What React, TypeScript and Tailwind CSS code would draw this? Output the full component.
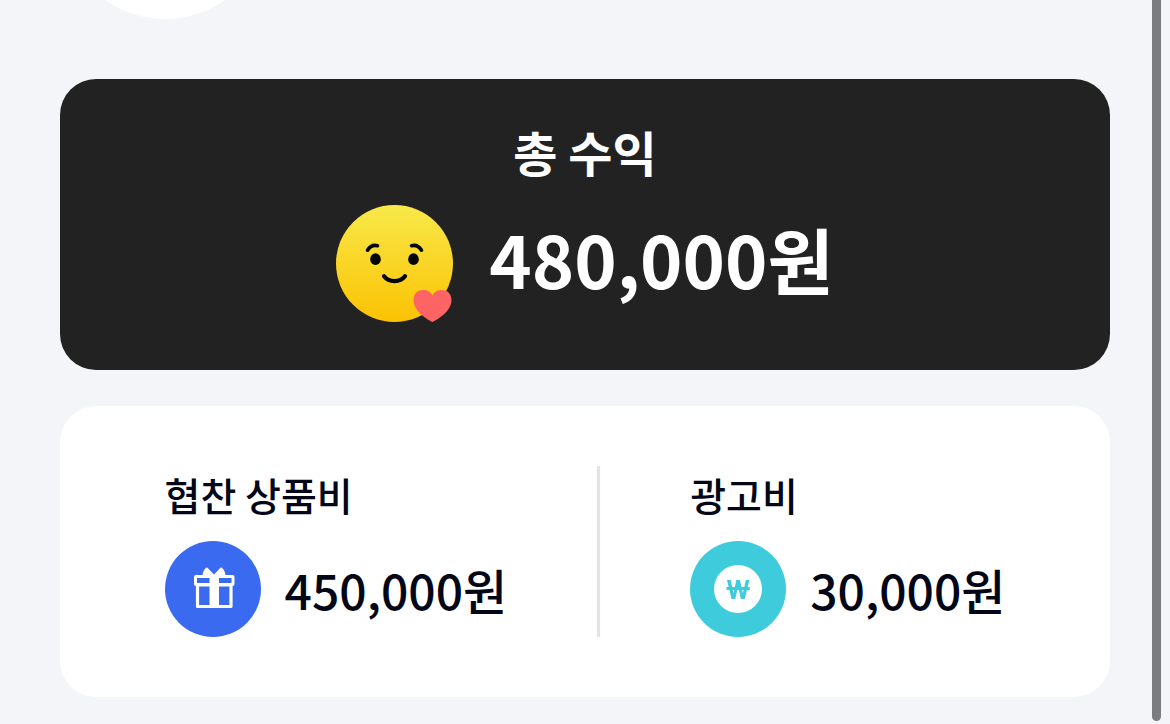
import React from 'react';

interface RevenueItemProps {
  label: string;
  amount: string;
  icon: React.ReactNode;
}

const SmileHeartIcon = () => (
  <svg width="117" height="117" viewBox="0 0 117 117" fill="none" aria-hidden="true" className="shrink-0">
    <defs>
      <linearGradient id="face" x1="58" y1="0" x2="58" y2="117" gradientUnits="userSpaceOnUse">
        <stop stopColor="#F8E94A" />
        <stop offset="1" stopColor="#FBC202" />
      </linearGradient>
    </defs>
    <circle cx="58.5" cy="58.5" r="58.5" fill="url(#face)" />
    <path d="M31.5 45.2C34 41.2 38 39.8 41.5 40.7" stroke="#000" strokeWidth="3.6" strokeLinecap="round" />
    <path d="M75.5 40.7C79.5 39.8 83 41.2 85.5 45.2" stroke="#000" strokeWidth="3.6" strokeLinecap="round" />
    <ellipse cx="39.5" cy="54.2" rx="5.3" ry="5.9" fill="#000" />
    <ellipse cx="77.5" cy="54.2" rx="5.3" ry="5.9" fill="#000" />
    <path d="M48 71.2C53 77.7 64 77.7 69 71.2" stroke="#000" strokeWidth="4.2" strokeLinecap="round" />
    <path
      d="M96.5 117C91 114.5 77.5 106 77.5 95C77.5 89 81.5 85 87 85C91.5 85 95 87 96.5 90.5C98 87 101.5 85 106 85C111.5 85 115.5 89 115.5 95C115.5 106 102 114.5 96.5 117Z"
      fill="#FF6464"
    />
  </svg>
);

const GiftIcon = () => (
  <svg width="96" height="96" viewBox="0 0 96 96" fill="none" aria-hidden="true" className="shrink-0">
    <circle cx="48" cy="48" r="48" fill="#3A6AF0" />
    <path
      d="M49 33.5L43 27.2Q41.8 26 40.6 27.2C38.7 29.2 37.6 31.5 37.5 35H60.5C60.4 31.5 59.3 29.2 57.4 27.2Q56.2 26 55 27.2Z"
      fill="#fff"
    />
    <rect x="30.5" y="35.5" width="37.5" height="8" rx="0.5" stroke="#fff" strokeWidth="3" />
    <path d="M32.5 44H66V65.5H32.5Z" stroke="#fff" strokeWidth="3.2" strokeLinejoin="round" />
    <path d="M44.5 34H54V66H44.5Z" fill="#fff" />
  </svg>
);

const WonIcon = () => (
  <svg width="96" height="96" viewBox="0 0 96 96" fill="none" aria-hidden="true" className="shrink-0">
    <circle cx="48" cy="48" r="48" fill="#3ECBDC" />
    <circle cx="48" cy="48" r="24" fill="#fff" />
    <path
      d="M37 39H40.6L43.6 52.2L46.3 39H49.9L52.8 52.2L55.9 39H59.4L54.7 58H50.9L48.1 45.5L45.3 58H41.5Z"
      fill="#3ECBDC"
    />
    <path d="M36.5 46H59.8V49H36.5Z" fill="#3ECBDC" />
  </svg>
);

function RevenueItem({ label, amount, icon }: RevenueItemProps) {
  return (
    <div className="flex flex-col gap-[18px]">
      <h3 className="text-[39px] leading-[57px] font-medium">{label}</h3>
      <div className="flex items-center gap-6">
        {icon}
        <p className="text-[48px] leading-[72px] font-medium">{amount}</p>
      </div>
    </div>
  );
}

export default function App() {
  return (
    <div className="relative min-h-screen overflow-hidden bg-[#F3F5F9] px-[60px] pb-[27px] text-[#020617] font-['Noto_Sans_CJK_KR',sans-serif]">
      {/* Profile circle, scrolled past the top */}
      <div className="h-[19px] flex flex-col justify-end">
        <div className="size-[210px] shrink-0 rounded-full bg-white" />
      </div>

      <main className="mt-[60px] flex flex-col gap-9">
        <section className="flex flex-col items-center rounded-[36px] bg-[#222222] pt-9 pb-12 text-white">
          <h2 className="text-[48px] leading-[72px] font-bold">총 수익</h2>
          <div className="mt-[18px] flex items-start gap-9">
            <SmileHeartIcon />
            <p className="text-[72px] leading-[105px] font-bold">480,000원</p>
          </div>
        </section>

        <section className="flex justify-center gap-[90px] rounded-[36px] bg-white py-[60px]">
          <RevenueItem label="협찬 상품비" amount="450,000원" icon={<GiftIcon />} />
          <div className="w-[3px] bg-[#E0E3EE]" />
          <RevenueItem label="광고비" amount="30,000원" icon={<WonIcon />} />
        </section>
      </main>

      {/* Scroll thumb */}
      <div className="absolute top-0 right-[9px] bottom-[3px] w-[9px] rounded-b-full bg-[#7C7C7E]" />
    </div>
  );
}
